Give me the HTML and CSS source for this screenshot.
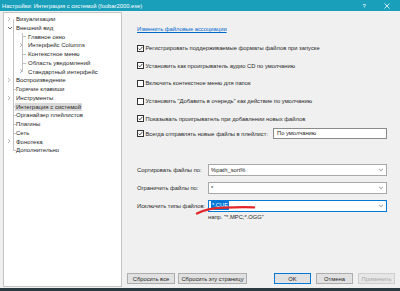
FILE: index.html
```html
<!DOCTYPE html>
<html lang="ru">
<head>
  <meta charset="UTF-8">
  <title>Настройки: Интеграция с системой</title>
  <link rel="stylesheet" href="styles.css">
</head>
<body>
  <div class="titlebar">
    <span class="title">Настройки: Интеграция с системой (foobar2000.exe)</span>
    <span class="help">?</span>
    <span class="close">
      <svg width="6" height="6" viewBox="0 0 6 6"><path d="M0.5 0.5L5.5 5.5M5.5 0.5L0.5 5.5" stroke="#fff" stroke-width="0.8"/></svg>
    </span>
  </div>

  <div class="main">
    <ul class="tree">
      <li class="item first"><span class="tw"><svg width="4" height="6" viewBox="0 0 4 6"><path d="M1 1L3 3L1 5" fill="none" stroke="#a6a6a6" stroke-width="0.8"/></svg></span>Визуализации</li>
      <li class="item"><span class="tw"><svg width="6" height="4" viewBox="0 0 6 4"><path d="M1 1L3 3L5 1" fill="none" stroke="#404040" stroke-width="0.8"/></svg></span>Внешний вид</li>
      <li class="item child leaf">Главное окно</li>
      <li class="item child"><span class="tw"><svg width="4" height="6" viewBox="0 0 4 6"><path d="M1 1L3 3L1 5" fill="none" stroke="#a6a6a6" stroke-width="0.8"/></svg></span>Интерфейс Columns</li>
      <li class="item child leaf">Контекстное меню</li>
      <li class="item child leaf">Область уведомлений</li>
      <li class="item child child-last"><span class="tw"><svg width="4" height="6" viewBox="0 0 4 6"><path d="M1 1L3 3L1 5" fill="none" stroke="#a6a6a6" stroke-width="0.8"/></svg></span>Стандартный интерфейс</li>
      <li class="item"><span class="tw"><svg width="4" height="6" viewBox="0 0 4 6"><path d="M1 1L3 3L1 5" fill="none" stroke="#a6a6a6" stroke-width="0.8"/></svg></span>Воспроизведение</li>
      <li class="item leaf">Горячие клавиши</li>
      <li class="item"><span class="tw"><svg width="4" height="6" viewBox="0 0 4 6"><path d="M1 1L3 3L1 5" fill="none" stroke="#a6a6a6" stroke-width="0.8"/></svg></span>Инструменты</li>
      <li class="item leaf"><span class="sel">Интеграция с системой</span></li>
      <li class="item leaf">Органайзер плейлистов</li>
      <li class="item leaf">Плагины</li>
      <li class="item leaf">Сеть</li>
      <li class="item"><span class="tw"><svg width="4" height="6" viewBox="0 0 4 6"><path d="M1 1L3 3L1 5" fill="none" stroke="#a6a6a6" stroke-width="0.8"/></svg></span>Фонотека</li>
      <li class="item leaf last">Дополнительно</li>
    </ul>

    <div class="page">
      <div class="settings">
        <a class="link" href="#">Изменить файловые ассоциации</a>

        <label class="check first-check"><span class="box on"></span>Регистрировать поддерживаемые форматы файлов при запуске</label>
        <label class="check"><span class="box on"></span>Установить как проигрыватель аудио CD по умолчанию</label>
        <label class="check"><span class="box"></span>Включить контекстное меню для папок</label>
        <label class="check"><span class="box"></span>Установить "Добавить в очередь" как действие по умолчанию</label>
        <label class="check"><span class="box on"></span>Показывать проигрыватель при добавлении новых файлов</label>
        <label class="check with-input"><span class="box on"></span>Всегда отправлять новые файлы в плейлист:<span class="textbox">По умолчанию</span></label>

        <div class="field first-field">
          <span class="field-label">Сортировать файлы по:</span>
          <span class="combo">%path_sort%<span class="arrow"></span></span>
        </div>
        <div class="field">
          <span class="field-label">Ограничить файлы по:</span>
          <span class="combo">*<span class="arrow"></span></span>
        </div>
        <div class="field marked">
          <span class="field-label">Исключить типы файлов:</span>
          <span class="combo focused"><span class="selected">*.CUE</span><span class="arrow"></span></span>
          <svg class="scribble" width="130" height="16" viewBox="0 0 130 16"><path d="M60 13.5C66 10 76 8 88 7.6C98 7.2 110 7 117 7.4" fill="none" stroke="#e2262b" stroke-width="2.4" stroke-linecap="round"/></svg>
        </div>
        <div class="hint">напр. "*.MPC;*.OGG"</div>
      </div>

      <div class="actions">
        <button class="btn reset-all">Сбросить все</button>
        <button class="btn reset-page">Сбросить эту страницу</button>
        <button class="btn ok">OK</button>
        <button class="btn">Отмена</button>
        <button class="btn" disabled>Применить</button>
      </div>
    </div>
  </div>

  <div class="taskbar"></div>
</body>
</html>
```

FILE: styles.css
```css
* {
  box-sizing: border-box;
}
html, body {
  margin: 0;
}
body {
  width: 400px;
  height: 291px;
  overflow: hidden;
  background: #f0f0f0;
  font-family: "Liberation Sans", Arial, sans-serif;
  font-size: 5.8px;
  color: #262626;
  display: flex;
  flex-direction: column;
}
.titlebar {
  height: 11px;
  flex: none;
  background: #1a9fbb;
  color: #fff;
  display: flex;
  align-items: center;
  padding-left: 2px;
  font-size: 5.8px;
}
.title {
  flex: 1;
  white-space: nowrap;
}
.help {
  width: 20px;
  text-align: center;
}
.close {
  width: 26px;
  display: flex;
  justify-content: center;
}
.main {
  flex: 1;
  display: flex;
  padding: 1px 0 1px 3px;
  min-height: 0;
}

/* tree */
.tree {
  width: 119px;
  flex: none;
  margin: 0;
  padding: 2px 0 0 0;
  list-style: none;
  background: #fff;
  border: 1px solid #c4c4c4;
  font-size: 6px;
}
.item {
  height: 8.76px;
  line-height: 8.76px;
  padding-left: 12px;
  white-space: nowrap;
  background: linear-gradient(#c2c2c2, #c2c2c2) 9px 0 / 1px 100% no-repeat;
}
.item.first {
  background: linear-gradient(#c2c2c2, #c2c2c2) 9px 4px / 1px 100% no-repeat;
}
.item.leaf {
  background:
    linear-gradient(#c2c2c2, #c2c2c2) 9px 50% / 3px 1px no-repeat,
    linear-gradient(#c2c2c2, #c2c2c2) 9px 0 / 1px 100% no-repeat;
}
.item.leaf.last {
  background:
    linear-gradient(#c2c2c2, #c2c2c2) 9px 50% / 3px 1px no-repeat,
    linear-gradient(#c2c2c2, #c2c2c2) 9px 0 / 1px 50% no-repeat;
}
.item.child {
  padding-left: 24px;
  background:
    linear-gradient(#c2c2c2, #c2c2c2) 18px 0 / 1px 100% no-repeat,
    linear-gradient(#c2c2c2, #c2c2c2) 9px 0 / 1px 100% no-repeat;
}
.item.child.leaf {
  background:
    linear-gradient(#c2c2c2, #c2c2c2) 18px 50% / 4px 1px no-repeat,
    linear-gradient(#c2c2c2, #c2c2c2) 18px 0 / 1px 100% no-repeat,
    linear-gradient(#c2c2c2, #c2c2c2) 9px 0 / 1px 100% no-repeat;
}
.item.child-last {
  background:
    linear-gradient(#c2c2c2, #c2c2c2) 18px 0 / 1px 50% no-repeat,
    linear-gradient(#c2c2c2, #c2c2c2) 9px 0 / 1px 100% no-repeat;
}
.tw {
  display: inline-flex;
  width: 9px;
  margin-left: -9px;
  align-items: center;
  height: 8px;
  vertical-align: middle;
  margin-top: -1px;
}
.sel {
  background: #d9d9d9;
  padding: 1px 1px;
  margin-left: -1px;
}

/* right page */
.page {
  flex: 1;
  display: flex;
  flex-direction: column;
  padding: 0 5px 3px 5px;
}
.settings {
  flex: 1;
  display: flex;
  flex-direction: column;
  padding: 12px 8px 0 10px;
}
.link {
  height: 10px;
  line-height: 10px;
  color: #0066cc;
  text-decoration: underline;
  align-self: flex-start;
}
.check {
  height: 10px;
  margin-top: 7.7px;
  display: flex;
  align-items: center;
  white-space: nowrap;
}
.check.first-check {
  margin-top: 9px;
}
.check.with-input {
  height: 11px;
  margin-top: 4.7px;
}
.box {
  width: 7px;
  height: 7px;
  border: 1px solid #333;
  background: #fff;
  margin-right: 1.5px;
  flex: none;
}
.box.on {
  background: #fff url("data:image/svg+xml;utf8,<svg xmlns='http://www.w3.org/2000/svg' width='5' height='5' viewBox='0 0 5 5'><path d='M0.5 2.6L1.8 3.9L4.5 0.8' fill='none' stroke='%23222' stroke-width='0.8'/></svg>") center / 5px 5px no-repeat;
}
.textbox {
  margin-left: auto;
  width: 114px;
  height: 11px;
  line-height: 9px;
  border: 1px solid #8a8a8a;
  background: #fff;
  padding-left: 3px;
}
.field {
  height: 12px;
  margin-top: 6px;
  display: grid;
  grid-template-columns: 71px 1fr;
  align-items: center;
  position: relative;
  white-space: nowrap;
}
.field.first-field {
  margin-top: 24.5px;
}
.combo {
  height: 12px;
  border: 1px solid #a8a8a8;
  background: #fff;
  display: flex;
  align-items: center;
  padding-left: 2px;
}
.combo.focused {
  border-color: #0078d7;
}
.selected {
  background: #0078d7;
  color: #fff;
  padding: 0 1px;
  line-height: 9px;
}
.arrow {
  margin-left: auto;
  margin-right: 3px;
  width: 4px;
  height: 4px;
  border-right: 1px solid #a0a0a0;
  border-bottom: 1px solid #a0a0a0;
  transform: rotate(45deg) scale(0.8);
  margin-top: -2px;
}
.scribble {
  position: absolute;
  left: 0;
  top: 0;
  overflow: visible;
}
.hint {
  margin-top: 1px;
  padding-left: 71px;
  line-height: 9px;
  white-space: nowrap;
}

/* buttons */
.actions {
  display: flex;
  height: 11px;
}
.btn {
  font: inherit;
  color: #262626;
  height: 11px;
  width: 37px;
  padding: 0;
  white-space: nowrap;
  background: #e1e1e1;
  border: 1px solid #adadad;
  margin-left: 5px;
}
.btn.reset-all {
  width: 48px;
  margin-left: 0;
}
.btn.reset-page {
  width: 69px;
  margin-left: 3px;
}
.btn.ok {
  margin-left: auto;
  border-color: #0078d7;
}
.btn:disabled {
  color: #a8a8a8;
  border-color: #cfcfcf;
  background: #e6e6e6;
}
.taskbar {
  height: 3px;
  flex: none;
  background: #2b3a40;
}
```
